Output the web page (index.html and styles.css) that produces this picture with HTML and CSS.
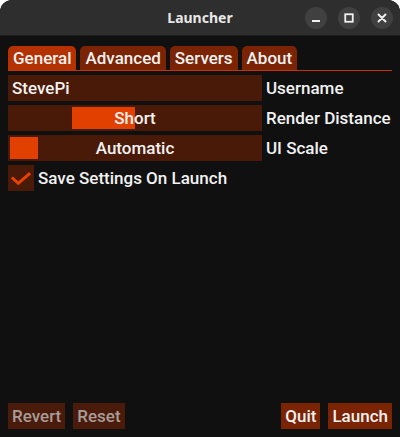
FILE: index.html
```html
<!DOCTYPE html>
<html>
<head>
<meta charset="utf-8">
<link rel="stylesheet" href="styles.css">
</head>
<body>
<div class="window">
  <header class="titlebar">
    <span class="title">Launcher</span>
    <div class="controls">
      <span class="ctl"><svg width="22" height="22" viewBox="0 0 22 22"><rect x="7" y="13" width="8" height="2" fill="#f0f0f0"/></svg></span>
      <span class="ctl"><svg width="22" height="22" viewBox="0 0 22 22"><rect x="7.25" y="7.25" width="7.5" height="7.5" fill="none" stroke="#f0f0f0" stroke-width="1.8"/></svg></span>
      <span class="ctl"><svg width="22" height="22" viewBox="0 0 22 22"><path d="M7.5 7.5 L14.5 14.5 M14.5 7.5 L7.5 14.5" stroke="#f0f0f0" stroke-width="1.9" stroke-linecap="round"/></svg></span>
    </div>
  </header>
  <main class="content">
    <nav class="tabs">
      <span class="tab active">General</span>
      <span class="tab">Advanced</span>
      <span class="tab">Servers</span>
      <span class="tab">About</span>
    </nav>
    <div class="rows">
      <div class="row">
        <div class="field text">StevePi</div>
        <span class="label">Username</span>
      </div>
      <div class="row">
        <div class="field slider"><span class="handle" style="left:64px;width:63px"></span><span class="stext">Short</span></div>
        <span class="label">Render Distance</span>
      </div>
      <div class="row">
        <div class="field slider"><span class="handle" style="left:2px;width:28px"></span><span class="stext">Automatic</span></div>
        <span class="label">UI Scale</span>
      </div>
      <div class="row check">
        <span class="box"><svg width="26" height="26" viewBox="0 0 26 26"><path d="M5 13.5 L10.3 18.3 L21 9" fill="none" stroke="#e84100" stroke-width="3" stroke-linecap="square"/></svg></span>
        <span class="label">Save Settings On Launch</span>
      </div>
    </div>
    <footer class="footer">
      <div class="group">
        <span class="btn disabled">Revert</span>
        <span class="btn disabled">Reset</span>
      </div>
      <div class="group">
        <span class="btn">Quit</span>
        <span class="btn">Launch</span>
      </div>
    </footer>
  </main>
</div>
</body>
</html>
```
FILE: styles.css
```css
html, body {
  margin: 0;
  padding: 0;
  background: #ffffff;
}
body {
  width: 400px;
  height: 437px;
  overflow: hidden;
  font-family: Roboto, "Noto Sans", sans-serif;
}
.window {
  width: 400px;
  height: 437px;
  display: flex;
  flex-direction: column;
  background: #101010;
  border-radius: 12px 12px 0 0;
  overflow: hidden;
}
.titlebar {
  height: 36px;
  flex: none;
  background: #2e2e2e;
  border-bottom: 1px solid #1c1c1c;
  box-sizing: border-box;
  position: relative;
  display: flex;
  align-items: center;
  justify-content: center;
}
.title {
  color: #e8e8e8;
  font-family: "Noto Sans", sans-serif;
  font-weight: 700;
  font-size: 14px;
}
.controls {
  position: absolute;
  right: 7px;
  top: 7px;
  display: flex;
  gap: 11px;
}
.ctl {
  width: 22px;
  height: 22px;
  border-radius: 50%;
  background: #404040;
  display: flex;
}
.content {
  flex: 1;
  display: flex;
  flex-direction: column;
  padding: 10px 8px 8px 8px;
  color: #f2f2f2;
  font-size: 17px;
  font-weight: 500;
}
.tabs {
  display: flex;
  gap: 4px;
  border-bottom: 1px solid #c83400;
  height: 24px;
}
.tab {
  height: 24px;
  padding: 0 5px;
  background: #7a2404;
  border-radius: 5px 5px 0 0;
  display: flex;
  align-items: center;
  line-height: 1;
  padding-top: 1px;
  box-sizing: border-box;
}
.tab.active {
  background: #b43200;
}
.rows {
  margin-top: 4px;
  display: flex;
  flex-direction: column;
  gap: 4px;
  flex: 1;
}
.row {
  display: flex;
  align-items: center;
  gap: 4px;
  height: 26px;
}
.field {
  width: 254px;
  flex: none;
  height: 26px;
  background: #4a1a08;
  box-sizing: border-box;
  display: flex;
  align-items: center;
  position: relative;
}
.field.text {
  padding-left: 4px;
}
.slider {
  justify-content: center;
}
.handle {
  position: absolute;
  top: 2px;
  bottom: 2px;
  background: #e24000;
}
.stext {
  position: relative;
}
.box {
  width: 26px;
  height: 26px;
  background: #4a1a08;
  display: flex;
}
.footer {
  display: flex;
  justify-content: space-between;
  align-items: center;
  height: 26px;
}
.group {
  display: flex;
  gap: 8px;
}
.btn {
  height: 26px;
  padding: 0 4px;
  background: #7a2404;
  display: flex;
  align-items: center;
}
.btn.disabled {
  background: #4a1a0a;
  color: #a89c98;
}
```
